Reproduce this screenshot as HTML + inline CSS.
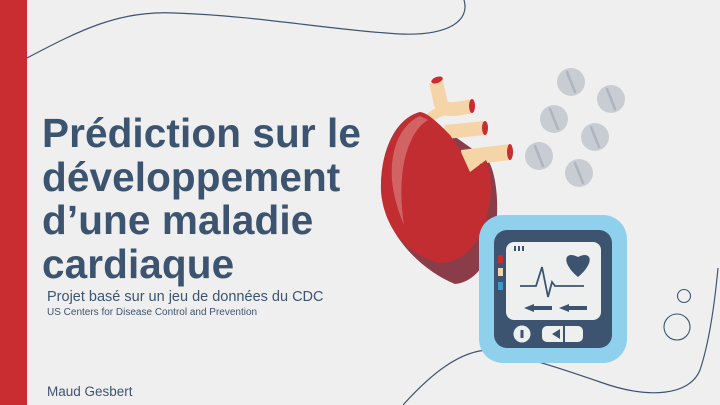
<!DOCTYPE html>
<html><head><meta charset="utf-8"><style>
html,body{margin:0;padding:0}
body{width:720px;height:405px;overflow:hidden;background:#efefef;position:relative;font-family:"Liberation Sans",sans-serif}
.bar{position:absolute;left:0;top:0;width:27px;height:405px;background:#c92d31}
h1{position:absolute;left:42px;top:112px;margin:0;font-size:40.5px;line-height:43.5px;font-weight:bold;color:#3d5470;letter-spacing:0.1px}
.sub{position:absolute;left:47px;top:289px;font-size:14.5px;color:#3d5470}
.sub2{position:absolute;left:47px;top:307px;font-size:10px;color:#3d5470}
.name{position:absolute;left:47px;top:384px;font-size:13.5px;color:#3d5470}
svg{position:absolute;left:0;top:0}
</style></head><body>
<div class="bar"></div>
<svg width="720" height="405">
<path d="M27,58 C80,30 120,10 175,13 C260,16 330,30 400,34 C450,36 470,20 464,0" fill="none" stroke="#3d5470" stroke-width="1.2"/>
<path d="M403,405 C430,375 460,350 490,350 C520,355 560,368 600,382 C650,400 690,395 700,370 C710,340 715,300 718,268" fill="none" stroke="#3d5470" stroke-width="1.2"/>
<circle cx="684" cy="296" r="6.5" fill="none" stroke="#3d5470" stroke-width="1.1"/>
<circle cx="677" cy="327" r="13" fill="none" stroke="#3d5470" stroke-width="1.1"/>
<g fill="#c8cdd3">
<circle cx="571" cy="82" r="14"/><circle cx="611" cy="99" r="14"/><circle cx="554" cy="119" r="14"/>
<circle cx="595" cy="137" r="14"/><circle cx="539" cy="156" r="14"/><circle cx="579" cy="173" r="14"/>
</g>
<g stroke="#aeb5be" stroke-width="2.5" stroke-linecap="round">
<line x1="567" y1="72" x2="575" y2="92"/><line x1="607" y1="89" x2="615" y2="109"/><line x1="550" y1="109" x2="558" y2="129"/>
<line x1="591" y1="127" x2="599" y2="147"/><line x1="535" y1="146" x2="543" y2="166"/><line x1="575" y1="163" x2="583" y2="183"/>
</g>
<path d="M420,112 C396,118 380,150 381,190 C383,232 420,270 455,284 C478,282 495,255 497,215 C498,190 494,170 488,160 Z" fill="#8a3d49"/>
<g fill="none" stroke="#f5d5a8" stroke-linecap="butt">
<path d="M436,82 L441,104 Q444,113 471,106" stroke-width="14"/>
<path d="M430,118 Q440,108 470,106" stroke-width="10"/>
<path d="M445,132 L485,128" stroke-width="14"/>
<path d="M462,158 L510,152" stroke-width="16"/>
<path d="M468,172 L478,156" stroke-width="12"/>
</g>
<path d="M420,112 C398,118 380,150 381,190 C383,225 405,255 440,263 C470,262 485,235 490,200 C492,180 490,168 486,160 L470,172 L460,150 L450,135 L440,125 C432,118 427,113 420,112 Z" fill="#c22d31"/>
<path d="M420,116 C400,125 390,150 392,180 C394,200 400,215 404,225 C400,200 400,170 408,148 C413,135 418,126 428,120 Z" fill="#d97a7c" opacity="0.7"/>
<ellipse cx="437" cy="80" rx="6" ry="3" fill="#c92d31" transform="rotate(-20 437 80)"/>
<ellipse cx="472" cy="106" rx="3" ry="7" fill="#c92d31"/>
<ellipse cx="485" cy="128" rx="3" ry="7" fill="#c92d31"/>
<ellipse cx="510" cy="152" rx="3" ry="8" fill="#c92d31"/>
<rect x="479" y="215" width="148" height="148" rx="24" fill="#8fd1ec"/>
<rect x="494" y="230" width="118" height="118" rx="13" fill="#3d5470"/>
<rect x="506" y="242" width="95" height="78" rx="8" fill="#eef0f0"/>
<rect x="514" y="246" width="2" height="5" fill="#3d5470"/><rect x="518" y="246" width="2" height="5" fill="#3d5470"/><rect x="522" y="246" width="2" height="5" fill="#3d5470"/>
<rect x="498" y="255" width="5" height="8" fill="#c92d31"/>
<rect x="498" y="268" width="5" height="8" fill="#f5d5a8"/>
<rect x="498" y="282" width="5" height="8" fill="#3a9ad0"/>
<path d="M578,277 C560,262 565,250 578,257 C591,250 596,262 578,277 Z" fill="#3d5470"/>
<path d="M520,286 L536,286 L542,267 L548,297 L552,282 L555,286 L584,286" fill="none" stroke="#3d5470" stroke-width="1.8"/>
<path d="M524,308 L534,304 L534,306 L552,306 L552,310 L534,310 L534,312 Z" fill="#3d5470"/>
<path d="M559,308 L569,304 L569,306 L587,306 L587,310 L569,310 L569,312 Z" fill="#3d5470"/>
<circle cx="522" cy="334" r="8.5" fill="#eef0f0"/><rect x="520.5" y="330" width="3" height="8" fill="#3d5470"/>
<rect x="542" y="326" width="41" height="16" rx="5" fill="#eef0f0"/>
<rect x="563" y="326" width="2" height="16" fill="#3d5470"/>
<path d="M552,334 L560,329 L560,339 Z" fill="#3d5470"/>
</svg>
<h1>Prédiction sur le<br>développement<br>d’une maladie<br>cardiaque</h1>
<div class="sub">Projet basé sur un jeu de données du CDC</div>
<div class="sub2">US Centers for Disease Control and Prevention</div>
<div class="name">Maud Gesbert</div>
</body></html>
